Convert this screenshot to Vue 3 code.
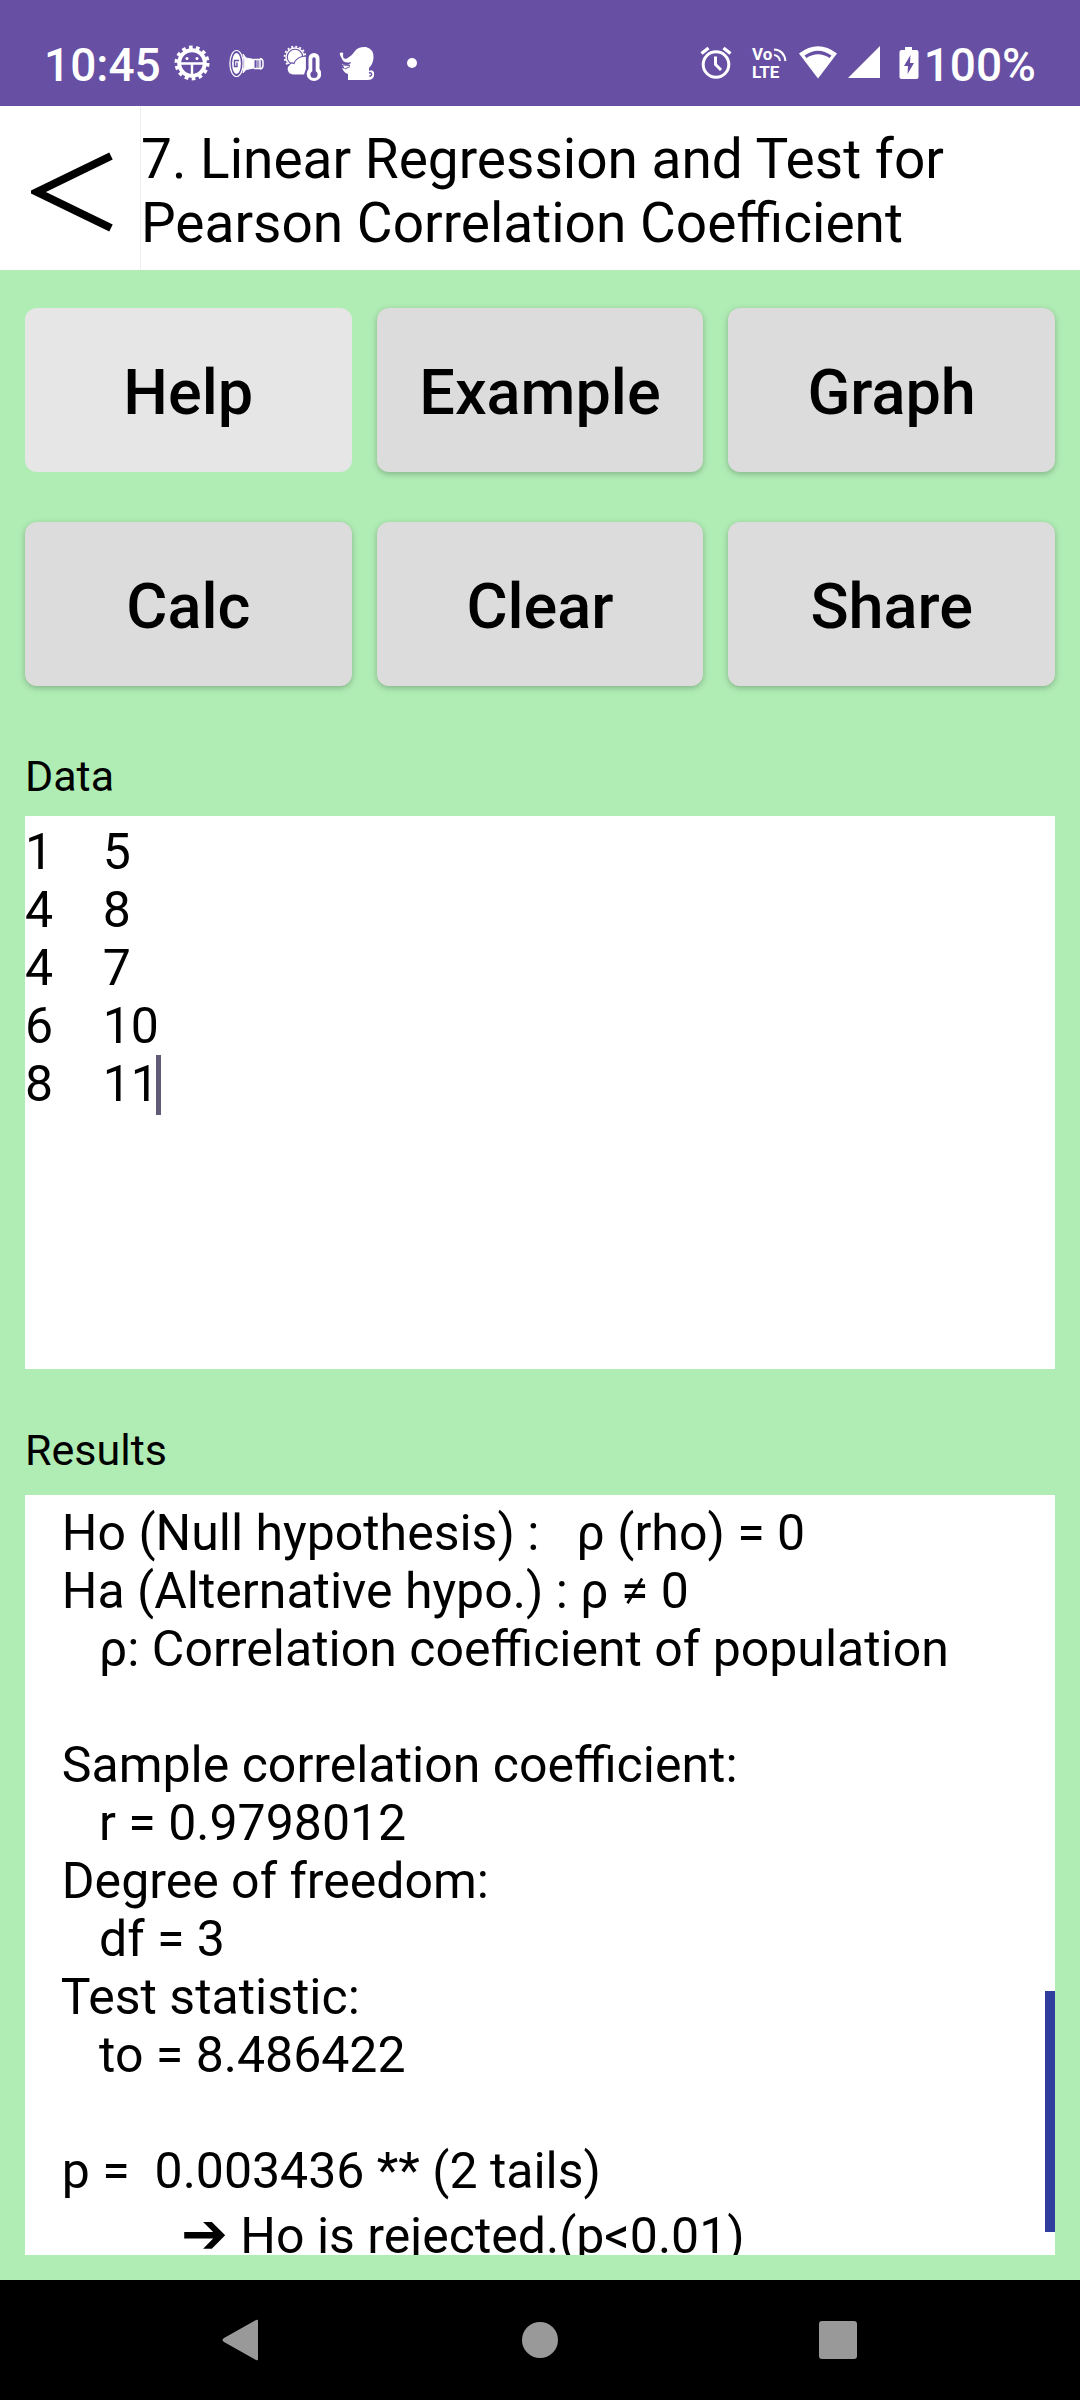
<script setup>
import { ref } from 'vue'

const actions = [
  { label: 'Help', pressed: true },
  { label: 'Example' },
  { label: 'Graph' },
  { label: 'Calc' },
  { label: 'Clear' },
  { label: 'Share' },
]

const data = ref('1    5\n4    8\n4    7\n6    10\n8    11')

const results = [
  '  Ho (Null hypothesis) :   ρ (rho) = 0',
  '  Ha (Alternative hypo.) : ρ ≠ 0',
  '     ρ: Correlation coefficient of population',
  '',
  '  Sample correlation coefficient:',
  '     r = 0.9798012',
  '  Degree of freedom:',
  '     df = 3',
  '  Test statistic:',
  '     to = 8.486422',
  '',
  '  p =  0.003436 ** (2 tails)',
].join('\n')
</script>

<template>
  <div class="screen">
    <header class="status">
      <span class="clock">10:45</span>
      <div class="notices">
        <svg width="38" height="38" viewBox="0 0 38 38" fill="none" stroke="#fff">
          <circle cx="19" cy="19" r="15.500" stroke-width="4" stroke-dasharray="3.600 3.360" />
          <circle cx="19" cy="19" r="12.800" stroke-width="4" />
          <path d="M8 19.5H30M19 19.5V31" stroke-width="2.4" />
          <circle cx="14" cy="14.500" r="1.500" fill="#fff" stroke="none" />
          <circle cx="24" cy="14.500" r="1.500" fill="#fff" stroke="none" />
        </svg>
        <svg width="38" height="38" viewBox="0 0 38 38" fill="none" stroke="#fff">
          <ellipse cx="8.5" cy="19.5" rx="6.6" ry="13" stroke-width="1.2" />
          <ellipse cx="8.5" cy="19.5" rx="4.4" ry="10.5" fill="#fff" stroke="none" />
          <path d="M11 16.5H6.5V22.500H9V18.500" stroke="#6750a4" stroke-width="1.4" />
          <path d="M15 10L18 14L26 15.500V24L18 25.500L15 29Q18 19.500 15 10Z" fill="#fff" stroke-width="1" />
          <path d="M26 15.500H32V24.500H26" stroke-width="1.500" />
          <path d="M28 16H31V24H28Z" fill="#fff" fill-opacity=".4" stroke="none" />
          <path d="M32 14.500Q35.500 15 35 19.500Q35.500 24.500 32 25" stroke-width="1.500" />
        </svg>
        <svg width="38" height="38" viewBox="0 0 38 38">
          <circle cx="12" cy="13" r="10.400" fill="none" stroke="#fff" stroke-width="1.800" stroke-dasharray="2 2.080" />
          <circle cx="12" cy="13" r="9" fill="none" stroke="#fff" stroke-width="1.400" />
          <circle cx="12" cy="13" r="7.200" fill="#fff" />
          <path d="M10 31A5.800 5.800 0 0 1 6.500 20.500Q8 18 11 19.500Q14 12 23.500 12V25L21.500 31Z" fill="#fff" stroke="#6750a4" stroke-width="1.200" />
          <path d="M25.500 25V14.500A5.500 5.500 0 0 1 36.500 14.500V25A7.300 7.300 0 1 1 25.500 25Z" fill="#fff" />
          <path d="M31 15V30" stroke="#6750a4" stroke-width="3.400" stroke-linecap="round" />
          <circle cx="31" cy="30.500" r="3.600" fill="#6750a4" />
        </svg>
        <svg width="38" height="38" viewBox="0 0 38 38" fill="#fff">
          <path d="M2 11Q1 8 4 8.500Q6 9 5 11Q5 16 9 14.500Q14 12 17 7Q20 2.500 28 3Q36 5 35.500 14Q35 20 31 24V27Q34 25 36 28Q37 36 30 36H10V30Q6 29 4 24L7 25L4 20Q9 22 12 20L13 18Q6 20 4 15Z" />
          <path d="M5 21L12 21.500M7 25L12 22.500" stroke="#6750a4" />
          <path d="M31 29Q34 28 33.500 31Q32.500 33 31.500 31.500" fill="none" stroke="#6750a4" stroke-width="1.400" />
        </svg>
        <svg width="38" height="38" viewBox="0 0 38 38"><circle cx="19" cy="19" r="5" fill="#fff" /></svg>
      </div>
      <div class="system">
        <svg class="alarm" width="34" height="38" viewBox="0 0 34 38" fill="none" stroke="#fff">
          <circle cx="17" cy="20.500" r="12.800" stroke-width="3" />
          <path d="M16.500 12.500V20.500L22 26" stroke-width="3" />
          <path d="M2.500 9.500L9.500 4M24.500 4L31.500 9.500" stroke-width="3.400" />
        </svg>
        <svg class="volte" width="38" height="38" viewBox="0 0 38 38" fill="#fff">
          <text x="2" y="16">Vo</text>
          <text x="2" y="34">LTE</text>
          <path d="M24 5.500Q34 6 35.500 17M24 11Q29 11.500 30 17" fill="none" stroke="#fff" stroke-width="2" />
        </svg>
        <svg width="40" height="38" viewBox="0 0 40 38">
          <path d="M2 9.500Q21-5 40 9.500L21 34.500Z" fill="#fff" />
          <path d="M7.500 11.500Q21 2 34.500 11.500L32.500 14Q21 6.500 9.500 14Z" fill="#6750a4" />
        </svg>
        <svg class="signal" width="34" height="38" viewBox="0 0 34 38"><path d="M2 34L34 2V34Z" fill="#fff" /></svg>
        <svg width="22" height="38" viewBox="0 0 22 38">
          <path d="M8 3H15V6H19.500Q21.500 6 21.500 8V33Q21.500 35 19.500 35H4.500Q2.500 35 2.500 33V8Q2.500 6 4.500 6H8Z" fill="#fff" />
          <path d="M13.500 11L7 22H11L10.500 30L17 19H13Z" fill="#6750a4" />
        </svg>
        <span class="percent">100%</span>
      </div>
    </header>

    <div class="titlebar">
      <button class="back" type="button" aria-label="Back">
        <svg width="84" height="84" viewBox="0 0 84 84">
          <path d="M80 6L6 42L80 78" fill="none" stroke="#000" stroke-width="8" />
        </svg>
      </button>
      <h1>7. Linear Regression and Test for Pearson Correlation Coefficient</h1>
    </div>

    <main>
      <div class="actions">
        <button
          v-for="a in actions"
          :key="a.label"
          type="button"
          :class="{ pressed: a.pressed }"
        >{{ a.label }}</button>
      </div>

      <label class="data-label" for="data">Data</label>
      <div class="field">
        <textarea id="data" v-model="data" spellcheck="false"></textarea>
        <span class="caret"></span>
      </div>

      <h2 id="results-title">Results</h2>
      <section class="results" aria-labelledby="results-title">
        <pre>{{ results }}</pre>
        <pre class="verdict"><span class="arrow">➔</span> Ho is rejected.(p&lt;0.01)</pre>
        <span class="thumb"></span>
      </section>
    </main>

    <nav>
      <button type="button" aria-label="Back">
        <svg width="40" height="44" viewBox="0 0 40 44"><path d="M35 2Q37 1 37 3V41Q37 43 35 42L3 24Q0 22 3 20Z" fill="#999" /></svg>
      </button>
      <button type="button" aria-label="Home">
        <svg width="40" height="44" viewBox="0 0 40 44"><circle cx="20" cy="22" r="18" fill="#999" /></svg>
      </button>
      <button type="button" aria-label="Recent apps">
        <svg width="40" height="44" viewBox="0 0 40 44"><rect x="0" y="3" width="38" height="38" rx="3" fill="#999" /></svg>
      </button>
    </nav>
  </div>
</template>

<style>
body {
  margin: 0;
}
</style>

<style scoped>
.screen {
  display: flex;
  flex-direction: column;
  height: 100vh;
  background: #b0edb4;
  color: #000;
  font-family: Roboto, "DejaVu Sans", sans-serif;
}
button {
  border: 0;
  padding: 0;
  color: inherit;
  font-family: inherit;
}
svg {
  display: block;
  flex: none;
}
.status {
  display: flex;
  align-items: center;
  height: 86px;
  padding: 20px 44px 0;
  background: #6750a4;
  color: #fff;
  font-size: 46px;
  font-weight: 500;
  line-height: 56px;
}
.clock,
.percent {
  padding-top: 3px;
}
.notices {
  display: flex;
  gap: 17px;
  margin-left: 12px;
}
.system {
  display: flex;
  align-items: center;
  gap: 9px;
  margin-left: auto;
}
.alarm,
.signal {
  margin-right: 8px;
}
.volte text {
  font-size: 17px;
  font-weight: 700;
}
.percent {
  margin-left: -4px;
}
.titlebar {
  display: flex;
  height: 164px;
  background: #fff;
}
.back {
  display: flex;
  align-items: center;
  width: 141px;
  padding-left: 31px;
  padding-top: 8px;
  background: #fff;
  border-right: 1px solid #eee;
}
h1 {
  flex: 1;
  margin: 0;
  padding: 21px 90px 0 0;
  font-size: 55px;
  font-weight: 400;
  line-height: 64px;
}
main {
  display: flex;
  flex: 1;
  flex-direction: column;
  min-height: 0;
  padding: 38px 25px 25px;
}
.actions {
  display: grid;
  grid-template-columns: repeat(3, 1fr);
  gap: 50px 25px;
}
.actions button {
  height: 164px;
  padding-top: 4px;
  border-radius: 12px;
  background: #dcdcdc;
  box-shadow: 0 2px 6px rgba(0, 0, 0, 0.25);
  font-size: 63px;
  font-weight: 500;
}
.actions .pressed {
  background: #e6e6e6;
  box-shadow: none;
}
.data-label,
h2 {
  margin: 64px 0 14px;
  font-size: 43px;
  font-weight: 400;
  line-height: 52px;
}
h2 {
  margin: 55px 0 19px;
}
.field {
  position: relative;
  display: flex;
  height: 553px;
}
textarea,
pre {
  margin: 0;
  font-family: inherit;
  font-size: 50px;
  line-height: 58px;
}
textarea {
  flex: 1;
  padding: 7px 0;
  border: 0;
  outline: 0;
  resize: none;
  background: #fff;
  color: inherit;
}
.caret {
  position: absolute;
  top: 239px;
  left: 131px;
  width: 5px;
  height: 60px;
  background: #625b77;
}
.results {
  position: relative;
  flex: 1;
  min-height: 0;
  padding: 9px 12px 0;
  overflow: hidden;
  background: #fff;
}
.verdict {
  padding-left: 144px;
  line-height: 72px;
}
.arrow {
  font-family: "DejaVu Sans", sans-serif;
  font-size: 56px;
  font-weight: 700;
  line-height: 58px;
}
.thumb {
  position: absolute;
  right: 0;
  bottom: 23px;
  width: 10px;
  height: 241px;
  background: #303f9f;
}
nav {
  display: flex;
  justify-content: space-around;
  height: 120px;
  padding: 0 91px;
  background: #000;
}
nav button {
  display: grid;
  place-items: center;
  flex: 1;
  background: none;
}
</style>
